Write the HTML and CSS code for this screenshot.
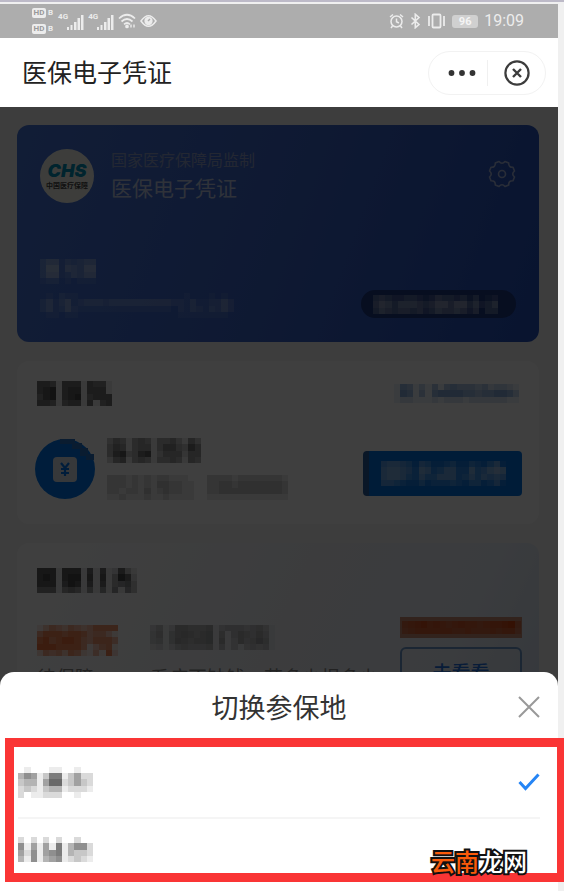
FILE: index.html
```
<!DOCTYPE html>
<html lang="zh-CN">
<head>
    <meta charset="UTF-8">
    <meta name="viewport" content="width=device-width, initial-scale=1.0">
    <title>医保电子凭证</title>
    <link rel="stylesheet" href="styles.css">
</head>
<body>
    <div class="phone">
        <!-- Status bar -->
        <div class="status-bar">
            <div class="status-group">
                <div class="hd-list">
                    <span class="hd-row"><span class="hd">HD</span><span class="hd-index">B</span></span>
                    <span class="hd-row"><span class="hd">HD</span><span class="hd-index">B</span></span>
                </div>
                <span class="net">4G</span>
                <svg class="signal" viewBox="0 0 17 16" width="17" height="16"><path d="M0 13h2v3H0zM3.500 11h2v5h-2zM7 8h2.500v8H7zM10.500 4H13v12h-2.500zM14 1h2.500v15H14z" fill="#ececec"/></svg>
                <span class="net">4G</span>
                <svg class="signal" viewBox="0 0 17 16" width="17" height="16"><path d="M0 13h2v3H0zM3.500 11h2v5h-2zM7 8h2.500v8H7zM10.500 4H13v12h-2.500zM14 1h2.500v15H14z" fill="#ececec"/></svg>
                <svg class="wifi" viewBox="0 0 18 16" width="18" height="16" fill="none" stroke="#ececec" stroke-width="1.7"><path d="M1 5.5Q9-2 17 5.5M3.5 8.5Q9 3.5 14.5 8.5M6 11.3Q9 8.7 12 11.3"/><circle cx="9" cy="13.4" r="1" fill="#ececec"/><path d="M13 11.500v3M16 11.500v3" stroke-width="1.4"/></svg>
                <svg viewBox="0 0 17 14" width="17" height="14" fill="none" stroke="#ececec" stroke-width="1.5"><path d="M1 7Q8.500-3.500 16 7Q8.500 17.500 1 7z"/><circle cx="8.500" cy="7" r="3.400" fill="#ececec"/><path d="M8 7l2-2" stroke="#adadad"/></svg>
            </div>
            <div class="status-group status-right">
                <svg viewBox="0 0 15 16" width="15" height="16" fill="none" stroke="#ececec" stroke-width="1.5"><circle cx="7.500" cy="8.500" r="5.500"/><path d="M7.500 5.500v3.200l2.400 1.300M1 4l3-2.500M14 4l-3-2.500M3.500 13L2 15M11.500 13l1.500 2"/></svg>
                <svg viewBox="0 0 11 16" width="11" height="16" fill="none" stroke="#ececec" stroke-width="1.6"><path d="M1.500 4.500l7.500 7-3.700 3.200V1.300L9 4.500l-7.500 7"/></svg>
                <svg class="vibrate" viewBox="0 0 19 16" width="19" height="16" fill="none" stroke="#ececec" stroke-width="1.800"><rect x="5.500" y="1.500" width="8" height="13" rx="1"/><path d="M2 3v10M17 3v10"/></svg>
                <span class="battery">96</span>
                <span class="clock">19:09</span>
            </div>
        </div>

        <!-- Title bar -->
        <header class="title-bar">
            <h1>医保电子凭证</h1>
            <div class="capsule">
                <button class="capsule-btn" type="button" aria-label="更多">
                    <svg viewBox="0 0 28 8" width="28" height="8" fill="#333"><circle cx="3.500" cy="4" r="2.900"/><circle cx="14" cy="4" r="2.900"/><circle cx="24.500" cy="4" r="2.900"/></svg>
                </button>
                <button class="capsule-btn capsule-close" type="button" aria-label="关闭">
                    <svg viewBox="0 0 26 26" width="26" height="26" fill="none" stroke="#3c3c3c" stroke-width="2.200"><circle cx="13" cy="13" r="11.600"/><path d="M9 9l8 8M17 9l-8 8" stroke-width="2.400"/></svg>
                </button>
            </div>
        </header>

        <main class="content">
            <!-- Insurance card -->
            <section class="card id-card">
                <div class="id-top">
                    <div class="logo">
                        <span class="logo-name">CHS</span>
                        <span class="logo-sub">中国医疗保障</span>
                    </div>
                    <div class="id-titles">
                        <p class="id-org">国家医疗保障局监制</p>
                        <h2>医保电子凭证</h2>
                    </div>
                    <button class="icon-btn" type="button" aria-label="设置">
                        <svg viewBox="0 0 28 28" width="28" height="28" fill="none" stroke="#a5b5dc" stroke-width="1.600" stroke-linejoin="round"><path d="M11 1.500Q14 5 17 1.500L20.700 3Q20.500 7.500 25 7.300L26.500 11Q23 14 26.500 17L25 20.700Q20.500 20.500 20.700 25L17 26.500Q14 23 11 26.500L7.300 25Q7.500 20.500 3 20.700L1.500 17Q5 14 1.500 11L3 7.300Q7.500 7.500 7.300 3z"/><circle cx="14" cy="14" r="3.500"/></svg>
                    </button>
                </div>
                <div class="id-bottom">
                    <div class="id-holder">
                        <svg class="mosaic" data-mosaic="name"></svg>
                        <svg class="mosaic" data-mosaic="number"></svg>
                    </div>
                    <button class="city-btn" type="button" aria-label="参保地">
                        <svg class="mosaic" data-mosaic="city"></svg>
                    </button>
                </div>
            </section>

            <!-- Payment -->
            <section class="card pay-card">
                <div class="card-head">
                    <svg class="mosaic" data-mosaic="payHead"></svg>
                    <a class="help-link" href="#" aria-label="帮助"><svg class="mosaic" data-mosaic="help"></svg></a>
                </div>
                <div class="pay-row">
                    <svg class="pay-icon" viewBox="0 0 60 60" width="60" height="60"><circle cx="30" cy="30" r="30" fill="#0076ec"/><path d="M25 0h15v4h7v5h6v6h6v6h-8v-4h-6v-7h-8V5H25z" fill="#2a70c0"/><rect x="18" y="18" width="24" height="25" rx="4" fill="#d8dee8"/><path d="M26 24l4 5 4-5M26 30h8M26 34h8M30 29v8" fill="none" stroke="#0076ec" stroke-width="2.200"/></svg>
                    <div class="pay-text">
                        <svg class="mosaic" data-mosaic="payTitle"></svg>
                        <svg class="mosaic" data-mosaic="paySub"></svg>
                    </div>
                    <button class="pay-btn" type="button" aria-label="支付"><svg class="mosaic" data-mosaic="payBtn"></svg></button>
                </div>
            </section>

            <!-- Extra cover -->
            <section class="card cover-card">
                <svg class="mosaic" data-mosaic="coverHead"></svg>
                <div class="cover-row">
                    <div class="cover-amount">
                        <svg class="mosaic" data-mosaic="amount" role="img" aria-label="400万"></svg>
                        <p>待保障</p>
                    </div>
                    <div class="cover-info">
                        <svg class="mosaic" data-mosaic="coverTitle"></svg>
                        <p>看病不缺钱，花多少报多少</p>
                    </div>
                    <div class="cover-action">
                        <div class="tag"><svg class="mosaic" data-mosaic="tag"></svg></div>
                        <button class="look-btn" type="button">去看看</button>
                    </div>
                </div>
            </section>
            <div class="overlay"></div>
        </main>
    </div>

    <!-- City picker -->
    <div class="sheet" role="dialog" aria-labelledby="sheet-title">
        <div class="sheet-head">
            <h2 id="sheet-title">切换参保地</h2>
            <button class="sheet-close" type="button" aria-label="关闭">
                <svg viewBox="0 0 22 22" width="22" height="22" fill="none" stroke="#999" stroke-width="2"><path d="M1 1l20 20M21 1L1 21"/></svg>
            </button>
        </div>
        <div class="options">
            <label class="option">
                <svg class="mosaic" data-mosaic="cityOne"></svg>
                <input type="radio" name="city" aria-label="城市一" checked>
                <svg class="tick" viewBox="0 0 22 18" width="22" height="18" fill="none" stroke="#2585f5" stroke-width="3"><path d="M1.500 9l6 6.500L20.500 1.500"/></svg>
            </label>
            <label class="option">
                <svg class="mosaic" data-mosaic="cityTwo"></svg>
                <input type="radio" name="city" aria-label="城市二">
                <svg class="tick" viewBox="0 0 22 18" width="22" height="18" fill="none" stroke="#2585f5" stroke-width="3"><path d="M1.500 9l6 6.500L20.500 1.500"/></svg>
            </label>
        </div>
        <div class="watermark"><span>云南</span>龙网</div>
    </div>

    <script src="mosaic.js"></script>
</body>
</html>
```
FILE: styles.css
```
* {
    margin: 0;
    padding: 0;
    box-sizing: border-box;
}

body {
    font-family: "Noto Sans CJK SC", "Noto Sans", sans-serif;
    background-color: #f0f0f0;
    color: #333;
    min-height: 100vh;
    overflow: hidden;
    border-top: 2px solid #bdbac8;
    padding: 2px 6px 0 0;
}

button {
    border: none;
    background: none;
    font-family: inherit;
    cursor: pointer;
}

svg {
    display: block;
    flex: none;
}

/* Status bar */
.status-bar {
    display: flex;
    justify-content: space-between;
    align-items: center;
    height: 34px;
    padding: 0 34px 0 32px;
    background: #adadad;
    color: #ececec;
}

.status-group {
    display: flex;
    align-items: center;
    gap: 4px;
}

.hd-list {
    display: flex;
    flex-direction: column;
    gap: 6px;
    margin-right: 1px;
}

.hd-row {
    display: flex;
    align-items: center;
    gap: 2px;
}

.hd {
    width: 14px;
    border-radius: 2px;
    background: #ececec;
    color: #999;
    font: bold 8px/10px Roboto, sans-serif;
    text-align: center;
}

.hd-index {
    font: bold 8px/10px Roboto, sans-serif;
}

.net {
    align-self: flex-start;
    margin-right: -5px;
    font: bold 8px/18px Roboto, sans-serif;
}

.signal {
    margin-top: 2px;
}

.status-right {
    gap: 6px;
}

.battery {
    width: 26px;
    border-radius: 3px;
    background: #d0d0d0;
    color: #f4f4f4;
    font: bold 11px/13px Roboto, sans-serif;
    text-align: center;
}

.clock {
    font: 16px/20px Roboto, sans-serif;
}

/* Title bar */
.title-bar {
    display: flex;
    justify-content: space-between;
    align-items: center;
    height: 69px;
    padding: 0 12px 0 22px;
    background: #fff;
}

.title-bar h1 {
    padding-bottom: 4px;
    font-size: 25px;
    font-weight: 400;
    line-height: 36px;
    color: #222;
}

.capsule {
    display: flex;
    align-items: center;
    height: 44px;
    border: 1px solid #f2f2f2;
    border-radius: 22px;
}

.capsule-btn {
    display: flex;
    justify-content: center;
    align-items: center;
    width: 58px;
    height: 26px;
    padding-left: 8px;
}

.capsule-close {
    padding: 0;
    border-left: 1px solid #f0f0f0;
}

/* Content under the overlay */
.content {
    position: relative;
    display: flex;
    flex-direction: column;
    gap: 19px;
    padding: 18px 19px 180px 17px;
    background: #f2f2f2;
}

.overlay {
    position: absolute;
    inset: 0;
    background: rgba(0, 0, 0, 0.75);
}

.card {
    border-radius: 12px;
    background: #fcfcfc;
    padding: 20px;
}

/* Insurance card */
.id-card {
    display: flex;
    flex-direction: column;
    justify-content: space-between;
    height: 217px;
    padding: 20px 23px 24px;
    background: linear-gradient(110deg, #4674d8, #3b64c8 50%, #2450bc);
}

.id-top,
.id-bottom {
    display: flex;
    justify-content: space-between;
    align-items: center;
}

.logo {
    display: flex;
    flex-direction: column;
    align-items: center;
    justify-content: center;
    width: 54px;
    height: 54px;
    margin-top: 4px;
    border-radius: 50%;
    background: #f4f4ec;
}

.logo-name {
    color: #0090b8;
    font: italic 900 18px/18px Inter, sans-serif;
}

.logo-sub {
    color: #444;
    font-size: 7px;
    font-weight: 700;
    line-height: 11px;
    white-space: nowrap;
}

.id-titles {
    flex: 1;
    margin-left: 17px;
}

.id-org {
    color: #8c9dc8;
    font-size: 16px;
    line-height: 26px;
}

.id-titles h2 {
    color: #bdc8e4;
    font-size: 21px;
    font-weight: 400;
    line-height: 30px;
}

.id-holder {
    display: flex;
    flex-direction: column;
    gap: 9px;
    color: #c8d4e4;
}

.city-btn {
    display: flex;
    align-items: center;
    align-self: flex-end;
    height: 28px;
    padding: 0 12px;
    border-radius: 14px;
    background: #1c3880;
    color: #d0d4dc;
}

/* Payment */
.pay-card {
    height: 163px;
}

.card-head {
    display: flex;
    justify-content: space-between;
    align-items: center;
}

.help-link {
    color: #3070c0;
}

.pay-row {
    display: flex;
    align-items: center;
    margin-top: 32px;
}

.pay-icon {
    margin-left: -2px;
}

.pay-text {
    flex: 1;
    display: flex;
    flex-direction: column;
    gap: 12px;
    margin-left: 12px;
}

.pay-btn {
    display: flex;
    align-items: center;
    height: 45px;
    margin: 8px -3px 0 0;
    padding: 0 16px 0 12px;
    border-left: 6px solid #2a5c9c;
    border-radius: 4px;
    background: #0070e0;
    color: #d0d8e4;
}

/* Extra cover */
.cover-card {
    padding-top: 25px;
    background: linear-gradient(115deg, #fcfcfc, #eef0f4 50%, #e8eef6 80%, #d4dff0);
}

.cover-row {
    display: flex;
    margin-top: 32px;
    font-size: 19px;
    line-height: 28px;
    color: #888;
}

.cover-amount,
.cover-info {
    display: flex;
    flex-direction: column;
    justify-content: space-between;
    height: 66px;
}

.cover-amount {
    width: 113px;
}

.cover-amount .mosaic {
    color: #e85010;
}

.cover-info {
    flex: 1;
    white-space: nowrap;
}

.cover-action {
    width: 122px;
    margin: -8px -3px 0 0;
}

.tag {
    display: flex;
    justify-content: center;
    height: 21px;
    padding-top: 4px;
    background: #c88c74;
    color: #d03c08;
}

.look-btn {
    width: 100%;
    height: 48px;
    margin-top: 9px;
    border: 2px solid #6c98cc;
    border-radius: 6px;
    color: #2070e0;
    font-size: 19px;
    font-weight: 500;
}

/* City picker */
.sheet {
    position: fixed;
    left: 0;
    right: 6px;
    bottom: 0;
    padding-bottom: 9px;
    border-radius: 14px 14px 0 0;
    background: #fff;
}

.sheet-head {
    display: flex;
    justify-content: center;
    align-items: center;
    height: 66px;
    padding-top: 4px;
}

.sheet-head h2 {
    font-size: 27px;
    font-weight: 400;
    line-height: 36px;
}

.sheet-close {
    position: absolute;
    right: 18px;
}

.options {
    margin: 0 -6px 0 5px;
    padding: 0 17px 0 4px;
    border: 9px solid #fa3535;
    border-right-width: 7px;
}

.option {
    display: flex;
    justify-content: space-between;
    align-items: center;
    height: 70px;
    color: #444;
    cursor: pointer;
}

.option + .option {
    height: 56px;
    padding-top: 6px;
    border-top: 2px solid #f5f5f5;
}

.option input {
    position: absolute;
    opacity: 0;
}

.option .tick {
    visibility: hidden;
}

.option input:checked + .tick {
    visibility: visible;
}

.watermark {
    position: absolute;
    right: 31px;
    bottom: 12px;
    color: #fff;
    font-size: 24px;
    font-weight: 500;
    line-height: 36px;
    -webkit-text-stroke: 4px #111;
    paint-order: stroke fill;
}

.watermark span {
    color: #fa5a0a;
}
```
FILE: mosaic.js
```
// Masked fields: each digit is one block, 0 is clear and 9 is solid
const masks = {
    name: ["355132344", "377154366", "366124355", "122010111"],
    number: ["0102110000000000000000010001010", "2413512333233333333332213112242", "2412521111111111111110213213242", "0110110000000000000000111111110"],
    city: ["343223321243323130120", "465355543466466352350", "354344342354454240330"],
    payHead: ["776177717661", "789178817771", "689178916777", "776167717167"],
    payTitle: ["354145414453153", "465145514664375", "478347813555255", "256145414454154"],
    paySub: ["22212121221110002222122222221", "22212121332211002233233333332", "22122131232211002233333333332", "11211121121111001111111111111"],
    help: ["15413141454443423321", "16514156666554556653", "12211121222122222211"],
    payBtn: ["45543143112311321351", "56654265235522634676", "56653253355523535454", "44321131222321331241"],
    coverHead: ["8881888171712731", "8981899181814972", "8881798171714563", "6661565151515153"],
    amount: ["1354354346666", "5777677645531", "7867887546664", "8887777513561", "2545365214172"],
    coverTitle: ["35137766671455545641", "46157876781615765751", "45158767781714756861", "23135655561514145451"],
    tag: ["5678676567665677894", "4566666655655565663"],
    cityOne: ["010001100100", "465137713522", "344158823532", "232134412221", "201122200100"],
    cityTwo: ["202020200200", "615151714662", "526156714332", "416145612321"]
};

document.querySelectorAll(".mosaic").forEach(svg => {
    const rows = masks[svg.dataset.mosaic];
    const cols = rows[0].length;
    svg.setAttribute("viewBox", `0 0 ${cols} ${rows.length}`);
    svg.setAttribute("width", Math.round(cols * 6.25));
    svg.setAttribute("height", Math.round(rows.length * 6.25));
    svg.setAttribute("preserveAspectRatio", "none");
    svg.setAttribute("fill", "currentColor");
    svg.setAttribute("shape-rendering", "crispEdges");
    svg.innerHTML = rows.map((row, y) =>
        [...row].map((level, x) =>
            level > 0 ? `<rect x="${x}" y="${y}" width="1" height="1" opacity="${level / 10}"/>` : ""
        ).join("")
    ).join("");
});
```
